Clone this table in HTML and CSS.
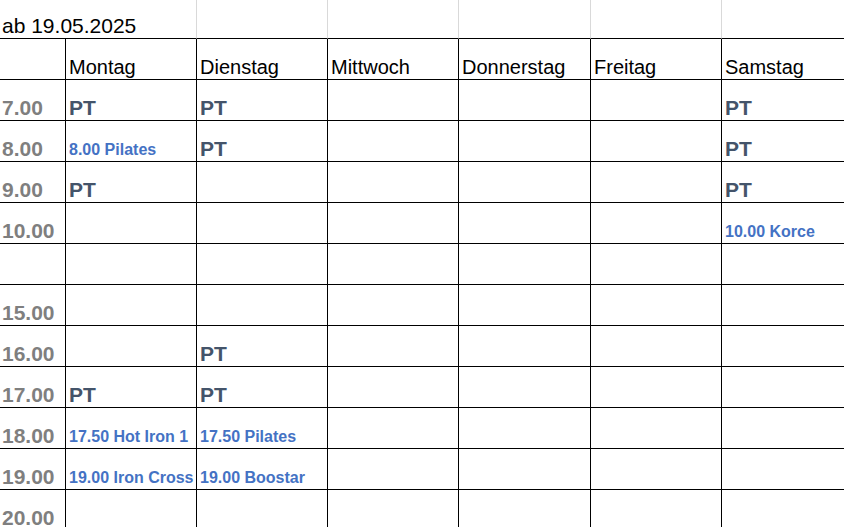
FILE: index.html
```html
<!DOCTYPE html>
<html lang="de">
<head>
<meta charset="utf-8">
<title>Stundenplan</title>
<link rel="stylesheet" href="styles.css">
</head>
<body>
<div class="sheet">
  <div class="c title span2">ab 19.05.2025</div>
  <div class="c title"></div><div class="c title"></div><div class="c title"></div><div class="c title"></div><div class="c title"></div>

  <div class="c"></div><div class="c day">Montag</div><div class="c day">Dienstag</div><div class="c day">Mittwoch</div><div class="c day">Donnerstag</div><div class="c day">Freitag</div><div class="c day">Samstag</div>

  <div class="c time">7.00</div><div class="c pt">PT</div><div class="c pt">PT</div><div class="c"></div><div class="c"></div><div class="c"></div><div class="c pt">PT</div>

  <div class="c time">8.00</div><div class="c ev">8.00 Pilates</div><div class="c pt">PT</div><div class="c"></div><div class="c"></div><div class="c"></div><div class="c pt">PT</div>

  <div class="c time">9.00</div><div class="c pt">PT</div><div class="c"></div><div class="c"></div><div class="c"></div><div class="c"></div><div class="c pt">PT</div>

  <div class="c time">10.00</div><div class="c"></div><div class="c"></div><div class="c"></div><div class="c"></div><div class="c"></div><div class="c ev">10.00 Korce</div>

  <div class="c time"></div><div class="c"></div><div class="c"></div><div class="c"></div><div class="c"></div><div class="c"></div><div class="c"></div>

  <div class="c time">15.00</div><div class="c"></div><div class="c"></div><div class="c"></div><div class="c"></div><div class="c"></div><div class="c"></div>

  <div class="c time">16.00</div><div class="c"></div><div class="c pt">PT</div><div class="c"></div><div class="c"></div><div class="c"></div><div class="c"></div>

  <div class="c time">17.00</div><div class="c pt">PT</div><div class="c pt">PT</div><div class="c"></div><div class="c"></div><div class="c"></div><div class="c"></div>

  <div class="c time">18.00</div><div class="c ev">17.50 Hot Iron 1</div><div class="c ev">17.50 Pilates</div><div class="c"></div><div class="c"></div><div class="c"></div><div class="c"></div>

  <div class="c time">19.00</div><div class="c ev">19.00 Iron Cross</div><div class="c ev">19.00 Boostar</div><div class="c"></div><div class="c"></div><div class="c"></div><div class="c"></div>

  <div class="c time">20.00</div><div class="c"></div><div class="c"></div><div class="c"></div><div class="c"></div><div class="c"></div><div class="c"></div>
</div>
</body>
</html>
```
FILE: styles.css
```css
html, body {
  margin: 0;
  padding: 0;
  background: #fff;
  overflow: hidden;
}
body {
  width: 844px;
  height: 527px;
  font-family: "Liberation Sans", Arial, sans-serif;
}
.sheet {
  display: grid;
  grid-template-columns: 66px 131px 131px 131px 132px 131px 131px;
  grid-template-rows: 39px;
  grid-auto-rows: 41px;
  width: 853px;
}
.c {
  box-sizing: border-box;
  border-right: 1px solid #000;
  border-bottom: 1px solid #000;
  display: flex;
  align-items: flex-end;
  padding: 0 0 2px 3px;
  font-size: 20px;
  line-height: 20px;
  white-space: nowrap;
  color: #000;
}
.title {
  border-right-color: #d9d9d9;
  padding-left: 2px;
  padding-bottom: 2px;
  font-size: 21px;
}
.span2 {
  grid-column: span 2;
}
.time {
  font-weight: bold;
  font-size: 21px;
  color: #7f7f7f;
  padding-left: 2px;
}
.pt {
  font-weight: bold;
  font-size: 21px;
  color: #44546a;
}
.ev {
  font-weight: bold;
  font-size: 16px;
  line-height: 16px;
  color: #4472c4;
  padding-bottom: 3px;
}
```
